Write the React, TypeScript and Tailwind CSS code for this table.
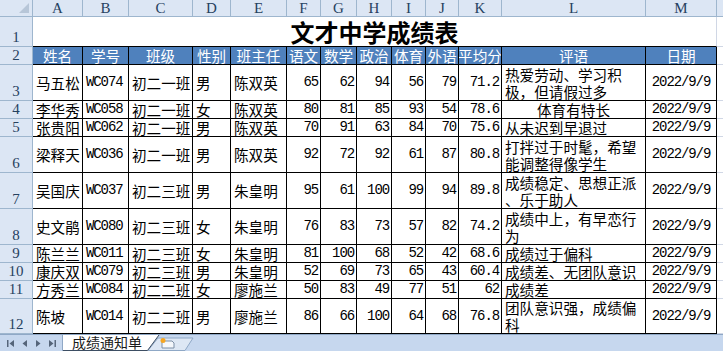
import React from 'react';
import clsx from 'clsx';

type Student = {
  name: string;
  id: string;
  cls: string;
  sex: string;
  teacher: string;
  scores: number[];
  avg: string;
  remark: string[];
  centerRemark?: boolean;
};

const students: Student[] = [
  { name: '马五松', id: 'WC074', cls: '初二一班', sex: '男', teacher: '陈双英', scores: [65, 62, 94, 56, 79], avg: '71.2', remark: ['热爱劳动、学习积', '极，但请假过多'] },
  { name: '李华秀', id: 'WC058', cls: '初二一班', sex: '女', teacher: '陈双英', scores: [80, 81, 85, 93, 54], avg: '78.6', remark: ['体育有特长'], centerRemark: true },
  { name: '张贵阳', id: 'WC062', cls: '初二一班', sex: '男', teacher: '陈双英', scores: [70, 91, 63, 84, 70], avg: '75.6', remark: ['从未迟到早退过'] },
  { name: '梁释天', id: 'WC036', cls: '初二一班', sex: '男', teacher: '陈双英', scores: [92, 72, 92, 61, 87], avg: '80.8', remark: ['打拌过于时髦，希望', '能调整得像学生'] },
  { name: '吴国庆', id: 'WC037', cls: '初二三班', sex: '男', teacher: '朱皇明', scores: [95, 61, 100, 99, 94], avg: '89.8', remark: ['成绩稳定、思想正派', '、乐于助人'] },
  { name: '史文鹃', id: 'WC080', cls: '初二三班', sex: '女', teacher: '朱皇明', scores: [76, 83, 73, 57, 82], avg: '74.2', remark: ['成绩中上，有早恋行', '为'] },
  { name: '陈兰兰', id: 'WC011', cls: '初二三班', sex: '女', teacher: '朱皇明', scores: [81, 100, 68, 52, 42], avg: '68.6', remark: ['成绩过于偏科'] },
  { name: '康庆双', id: 'WC079', cls: '初二三班', sex: '男', teacher: '朱皇明', scores: [52, 69, 73, 65, 43], avg: '60.4', remark: ['成绩差、无团队意识'] },
  { name: '方秀兰', id: 'WC084', cls: '初二二班', sex: '女', teacher: '廖施兰', scores: [50, 83, 49, 77, 51], avg: '62', remark: ['成绩差'] },
  { name: '陈坡', id: 'WC014', cls: '初二二班', sex: '男', teacher: '廖施兰', scores: [86, 66, 100, 64, 68], avg: '76.8', remark: ['团队意识强，成绩偏', '科'] }
];

const letters = ['A', 'B', 'C', 'D', 'E', 'F', 'G', 'H', 'I', 'J', 'K', 'L', 'M'];
const headers = ['姓名', '学号', '班级', '性别', '班主任', '语文', '数学', '政治', '体育', '外语', '平均分', '评语', '日期'];

const cjk = "font-['Noto_Sans_CJK_SC',sans-serif]";
// SimSun-like half width digits: mono squeezed to ~7.3px per char
const mono = "font-['Liberation_Mono',monospace] text-[14px] tracking-[-1.1px] leading-[17px]";

const HeadCell = ({ children, className }: { children?: React.ReactNode; className?: string }) => (
  <div
    className={clsx(
      "box-border border-r border-b border-[#9eb6ce] bg-[#dce6f4] text-[#26415f] font-['Liberation_Serif',serif] text-[15px] flex justify-center overflow-hidden",
      className
    )}>
    {children}
  </div>
);

const Cell = ({ children, className }: { children?: React.ReactNode; className?: string }) => (
  <div className={clsx('box-border border-r border-b border-black flex items-center overflow-hidden whitespace-nowrap text-black', className)}>
    {children}
  </div>
);

const GridLine = () => <div className="box-border border-b border-[#d0d7e5]" />;

const NavIcon = ({ d }: { d: string }) => (
  <svg width="9" height="9" viewBox="0 0 9 9">
    <path d={d} fill="#55657a" />
  </svg>
);

export default function App() {
  return (
    <div className="w-[723px] h-[351px] overflow-hidden bg-white flex flex-col select-none">
      <div
        className={clsx(
          'grid grid-cols-[33px_50px_46px_64px_38px_56px_34px_36px_35px_34px_33px_43px_144px_71px_6px]',
          'grid-rows-[17px_30px_18px_36px_18px_18px_36px_36px_36px_18px_18px_18px_35px]'
        )}>
        {/* column headers */}
        <HeadCell className="relative">
          <svg className="absolute right-[3px] bottom-[3px]" width="10" height="10" viewBox="0 0 10 10">
            <path d="M10 0 L10 10 L0 10 Z" fill="#b7c6d8" />
          </svg>
        </HeadCell>
        {letters.map(l => (
          <HeadCell key={l} className="items-center leading-[16px]">
            {l}
          </HeadCell>
        ))}
        <HeadCell className="border-r-0" />

        {/* row 1: title */}
        <HeadCell className="items-end leading-[15px] pb-[1px]">1</HeadCell>
        <div className={clsx('col-span-13 box-border border-r border-r-[#d0d7e5] border-b border-b-black flex items-end justify-center pb-[1px] text-[24px] leading-[26px] font-bold text-black', cjk)}>
          文才中学成绩表
        </div>
        <GridLine />

        {/* row 2: header */}
        <HeadCell className="items-end leading-[15px] pb-[1px]">2</HeadCell>
        {headers.map(h => (
          <Cell key={h} className={clsx('bg-[#4f81bd] justify-center text-white! text-[14.6px] leading-[17px]', cjk)}>
            {h}
          </Cell>
        ))}
        <GridLine />

        {students.map((s, i) => (
          <React.Fragment key={s.id}>
            <HeadCell className="items-end leading-[15px] pb-[1px]">{i + 3}</HeadCell>
            <Cell className={clsx('pl-[3px] text-[14.6px] leading-[17px]', cjk)}>{s.name}</Cell>
            <Cell className={clsx('pl-[3px]', mono)}>{s.id}</Cell>
            <Cell className={clsx('pl-[3px] text-[14.6px] leading-[17px]', cjk)}>{s.cls}</Cell>
            <Cell className={clsx('pl-[3px] text-[14.6px] leading-[17px]', cjk)}>{s.sex}</Cell>
            <Cell className={clsx('pl-[3px] text-[14.6px] leading-[17px]', cjk)}>{s.teacher}</Cell>
            {s.scores.map((sc, j) => (
              <Cell key={j} className={clsx('justify-end pr-[2px]', mono)}>
                {sc}
              </Cell>
            ))}
            <Cell className={clsx('justify-end pr-[2px]', mono)}>{s.avg}</Cell>
            <Cell
              className={clsx(
                'flex-col justify-center text-[14.6px] leading-[17px]',
                s.centerRemark ? 'items-center' : 'items-start pl-[3px]',
                cjk
              )}>
              {s.remark.map(line => (
                <span key={line}>{line}</span>
              ))}
            </Cell>
            <Cell className={clsx('justify-center', mono)}>2022/9/9</Cell>
            <GridLine />
          </React.Fragment>
        ))}
      </div>

      {/* sheet tabs */}
      <div className="h-[17px] flex bg-[#c6d7ee] border-t border-[#8fa8c6] box-border">
        <div className="w-[63px] flex items-center justify-around px-[3px] border-r border-[#8fa8c6]">
          <NavIcon d="M1 1 H2.5 V8 H1 Z M8 1 L3.5 4.5 L8 8 Z" />
          <NavIcon d="M7 1 L2.5 4.5 L7 8 Z" />
          <NavIcon d="M2 1 L6.5 4.5 L2 8 Z" />
          <NavIcon d="M1 1 L5.5 4.5 L1 8 Z M6.5 1 H8 V8 H6.5 Z" />
        </div>
        <div className="relative w-[140px] h-full">
          <svg className="absolute inset-0" width="140" height="16" viewBox="0 0 140 16">
            <path d="M85 15.5 L95 3 H130 L122 15.5 Z" fill="#dde7f4" stroke="#8fa8c6" />
            <path d="M0 0 H96 L84.5 15.5 H0 Z" fill="#ffffff" />
            <path d="M0 15.5 H84.5 L96 0" fill="none" stroke="#3d4e63" />
            <path d="M99 6 H109 L111 8 V13 H99 Z" fill="#f4f7fb" stroke="#7d8fa6" />
            <circle cx="100" cy="5.5" r="2.5" fill="#f5a623" />
          </svg>
          <span className={clsx('absolute left-[9px] top-[-1px] text-[14px] leading-[17px] text-[#1a1a1a]', cjk)}>成绩通知单</span>
        </div>
      </div>
    </div>
  );
}
